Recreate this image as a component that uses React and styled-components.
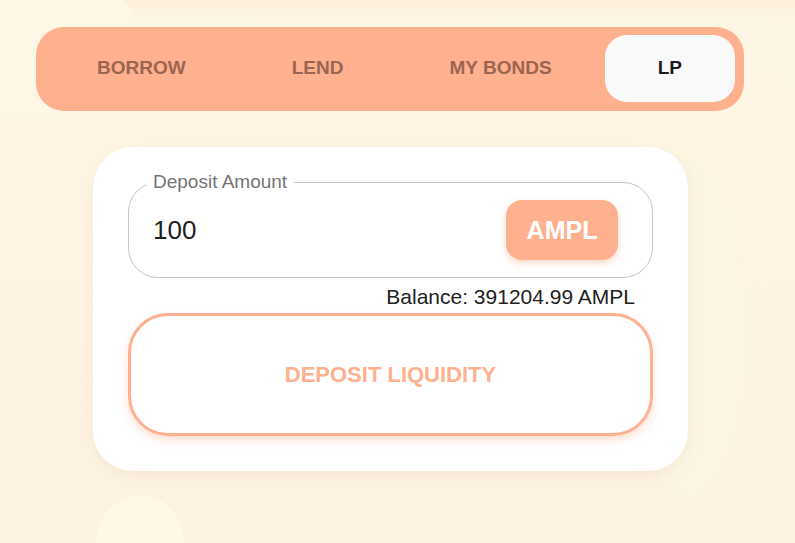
import React from "react";
import styled, { createGlobalStyle } from "styled-components";

const GlobalStyle = createGlobalStyle`
    html, body {
        margin : 0;
        padding : 0;
    }
    body {
        min-height : 543px;
        font-family : "Liberation Sans", Arial, sans-serif;
        background-color : #fdf2e1;
        background-image :
            radial-gradient(ellipse 110px 80px at 30px 40px, #fff7e6 98%, transparent 100%),
            radial-gradient(ellipse 60px 170px at 690px 330px, #fcf5e4 98%, transparent 100%),
            radial-gradient(ellipse 45px 50px at 140px 545px, #fff8e7 98%, transparent 100%),
            linear-gradient(180deg, #fdf0dc 0px, #fef6e4 20px, #fdf2e1 100%);
    }
`

const tabs = ["BORROW", "LEND", "MY BONDS", "LP"];

const App = () => {
    return (
        <Page>
            <GlobalStyle />
            <TabBar>
                {tabs.map((t) => (
                    <Tab key={t} active={t === "LP"}>{t}</Tab>
                ))}
            </TabBar>
            <Card>
                <Field>
                    <Legend>Deposit Amount</Legend>
                    <FieldRow>
                        <Amount>100</Amount>
                        <TokenButton>AMPL</TokenButton>
                    </FieldRow>
                </Field>
                <Balance>Balance: 391204.99 AMPL</Balance>
                <DepositButton>DEPOSIT LIQUIDITY</DepositButton>
            </Card>
        </Page>
    )
}

const Page = styled.div`
    padding : 27px 0 0 36px;
    display : flex;
    flex-direction : column;
`

const TabBar = styled.div`
    width : 708px;
    height : 84px;
    box-sizing : border-box;
    padding : 8px 9px 9px 8px;
    display : flex;
    background-color : #ffb08e;
    border-radius : 28px;
`

const Tab = styled.div`
    flex : 1 1 auto;
    display : flex;
    align-items : center;
    justify-content : center;
    padding : 0 53px 1px;
    border-radius : 22px;
    font-size : 19px;
    font-weight : 700;
    color : ${(p) => (p.active ? "#1c1c1c" : "#9b6552")};
    background-color : ${(p) => (p.active ? "#f9f9fa" : "transparent")};
`

const Card = styled.div`
    margin : 36px 0 0 57px;
    width : 595px;
    box-sizing : border-box;
    padding : 24px 35px 35px;
    background : #fff;
    border-radius : 40px;
    box-shadow : 0 4px 14px rgba(200, 170, 130, 0.15);
    display : flex;
    flex-direction : column;
`

const Field = styled.fieldset`
    margin : 0;
    min-width : 0;
    padding : 7px 34px 17px 24px;
    border : 1px solid #c4c4c4;
    border-radius : 30px;
`

const Legend = styled.legend`
    padding : 0 7px 0 6px;
    margin-left : -6px;
    font-size : 19px;
    line-height : 22px;
    color : #757575;
`

const FieldRow = styled.div`
    display : flex;
    align-items : center;
    justify-content : space-between;
`

const Amount = styled.div`
    font-size : 26px;
    color : #1e1e1e;
`

const TokenButton = styled.div`
    width : 112px;
    height : 60px;
    display : flex;
    align-items : center;
    justify-content : center;
    background-color : #ffb08e;
    color : #fff;
    font-size : 25px;
    font-weight : 700;
    border-radius : 16px;
    box-shadow : 0 3px 7px rgba(230, 140, 100, 0.35);
`

const Balance = styled.div`
    align-self : flex-end;
    margin : 7px 18px 0 0;
    font-size : 21px;
    line-height : 24px;
    color : #222;
`

const DepositButton = styled.div`
    margin-top : 4px;
    height : 123px;
    box-sizing : border-box;
    display : flex;
    align-items : center;
    justify-content : center;
    border : 3px solid #ffb08e;
    border-radius : 40px;
    box-shadow : 0 4px 8px rgba(255, 150, 110, 0.3);
    color : #ffb08e;
    font-size : 22px;
    font-weight : 700;
`

export default App;
